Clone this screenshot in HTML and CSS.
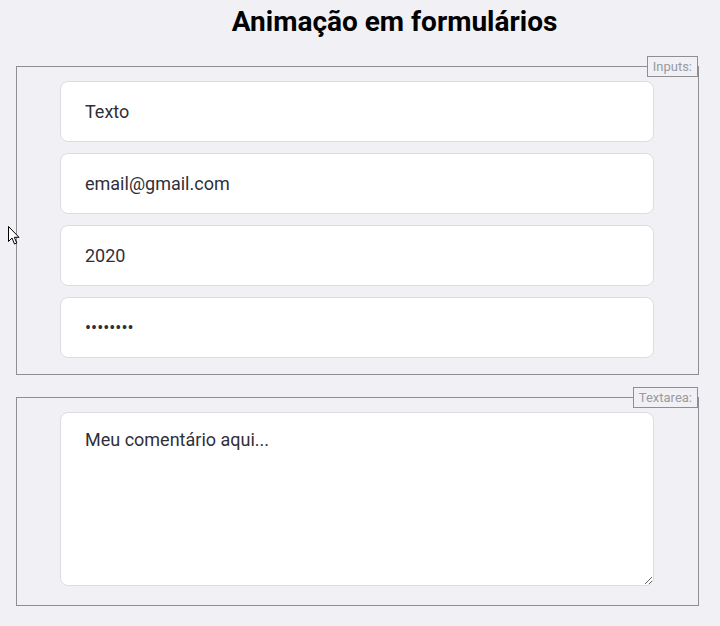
FILE: index.html
```html
<!DOCTYPE html>
<html lang="pt-BR">
<head>
<meta charset="utf-8">
<title>Animação em formulários</title>
<link rel="stylesheet" href="styles.css">
</head>
<body>
<h1 class="title">Animação em formulários</h1>
<form class="form">
  <fieldset class="group">
    <legend class="group-legend">Inputs:</legend>
    <input class="field" type="text" value="Texto">
    <input class="field" type="email" value="email@gmail.com">
    <input class="field" type="number" value="2020">
    <input class="field" type="password" value="12345678">
  </fieldset>
  <fieldset class="group group-area">
    <legend class="group-legend">Textarea:</legend>
    <textarea class="field area" spellcheck="false">Meu comentário aqui...</textarea>
  </fieldset>
</form>
<svg class="cursor" width="12" height="19" viewBox="0 0 12 19" aria-hidden="true">
  <path d="M0.5 0.5 L0.5 15.5 L4 12 L6.5 18 L8.8 17 L6.3 11.3 L11 11.3 Z" fill="#fff" stroke="#000" stroke-width="1"/>
</svg>
</body>
</html>
```
FILE: styles.css
```css
html, body {
  margin: 0;
  padding: 0;
  background: #f0f0f5;
}
body {
  font-family: Roboto, "Noto Sans", sans-serif;
  padding: 0 21px 0 16px;
  position: relative;
}
.title {
  margin: 0;
  padding: 6px 0 0 74px;
  font-size: 28px;
  line-height: 32px;
  font-weight: 700;
  color: #000;
  text-align: center;
  height: 50px;
}
.form {
  display: flex;
  flex-direction: column;
  gap: 12px;
}
.group {
  margin: 0;
  border: 1px solid #8e8e93;
  padding: 4px 44px 16px 43px;
  display: flex;
  flex-direction: column;
  gap: 11px;
  min-width: 0;
}
.group-legend {
  margin-left: auto;
  margin-right: -44px;
  border: 1px solid #8e8e93;
  padding: 0 5px;
  font-size: 13px;
  line-height: 19px;
  color: #9a9aa0;
}
.field {
  box-sizing: border-box;
  width: 100%;
  height: 61px;
  margin: 0;
  padding: 0 24px;
  border: 1px solid #dcdce3;
  border-radius: 8px;
  background: #fff;
  font-family: Roboto, "Noto Sans", sans-serif;
  font-size: 18px;
  color: #2f2f3a;
  outline: none;
}
.area {
  display: block;
  height: 174px;
  padding: 16px 24px;
  line-height: 21px;
  resize: vertical;
}
.group-area {
  padding-bottom: 19px;
}
.cursor {
  position: absolute;
  left: 8px;
  top: 226px;
}
```
